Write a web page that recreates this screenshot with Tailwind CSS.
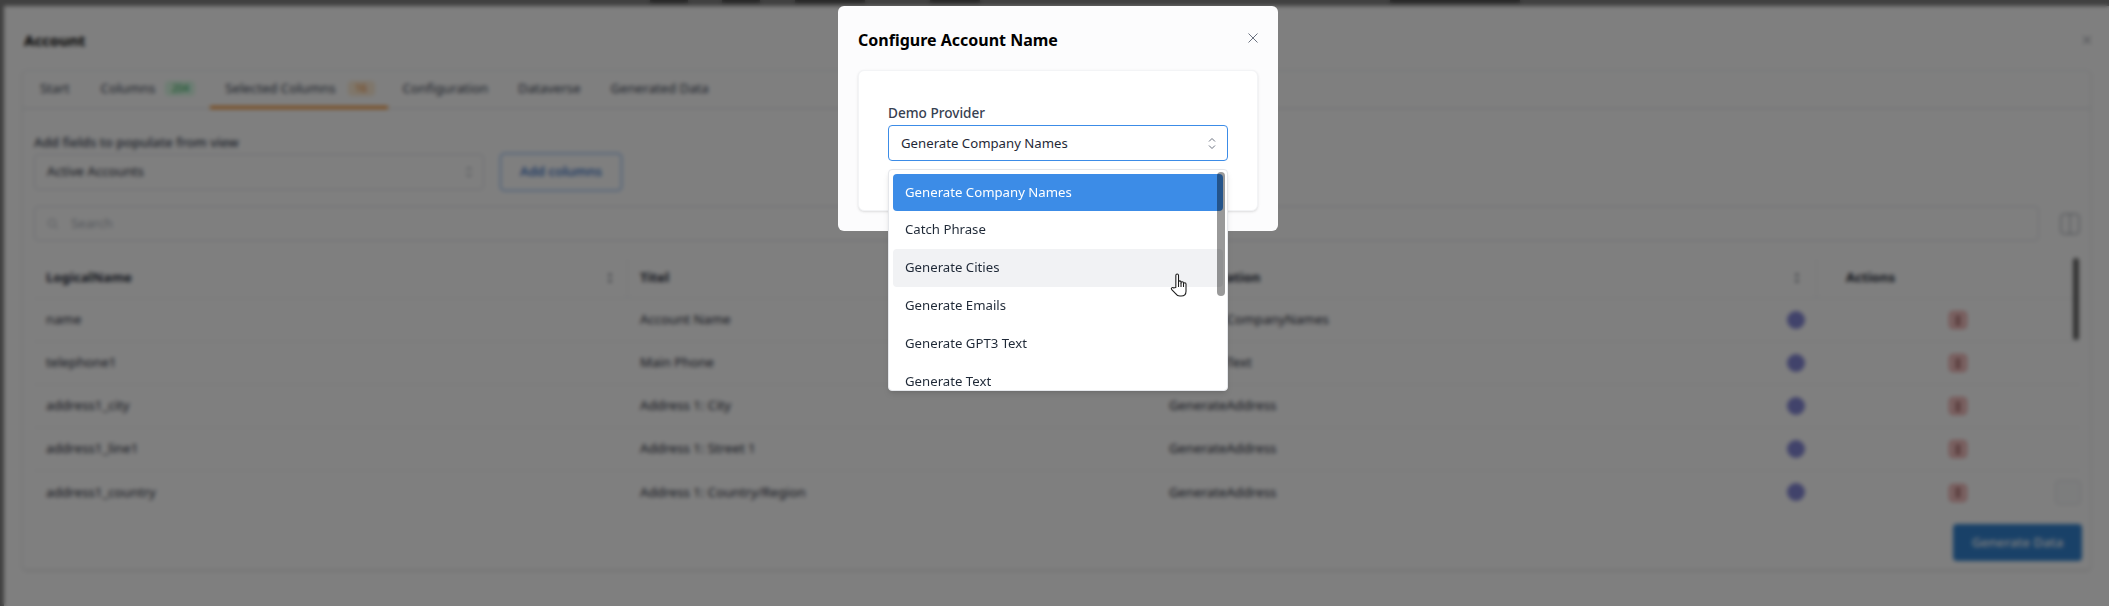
<!DOCTYPE html>
<html lang="en">
<head>
    <meta charset="UTF-8">
    <title>Configure Account Name</title>
    <script src="https://cdn.jsdelivr.net/npm/@tailwindcss/browser@4"></script>
</head>
<body class="font-['Noto_Sans',sans-serif] antialiased">
<div class="relative w-[2109px] h-[606px] overflow-hidden bg-[#808080] flex flex-col text-[13.2px] text-[#1f2937]">
    <!-- Top page strip -->
    <div class="relative h-[6px] shrink-0 overflow-hidden">
        <div class="absolute left-[650px] top-0 w-[38px] h-[3px] bg-[#4b4b4b]"></div>
        <div class="absolute left-[722px] top-0 w-[38px] h-[3px] bg-[#4b4b4b]"></div>
        <div class="absolute left-[795px] top-0 w-[70px] h-[3px] bg-[#4b4b4b]"></div>
        <div class="absolute left-[930px] top-0 w-[50px] h-[3px] bg-[#4b4b4b]"></div>
        <div class="absolute left-[1390px] top-0 w-[130px] h-[3px] bg-[#4b4b4b]"></div>
    </div>

    <!-- Drawer behind the dialog -->
    <div class="flex-1 ml-[4px] bg-white">
        <div class="flex justify-between items-start pl-[20px] pr-[17px] pt-[25px] h-[64px]">
            <span class="text-[15px] leading-[18px] font-bold text-black">Account</span>
            <svg class="w-[10px] h-[10px] mt-[4px] text-[#6b7280]" viewBox="0 0 10 10" fill="none" stroke="currentColor" stroke-width="1"><path d="M1 1l8 8M9 1l-8 8"/></svg>
        </div>
        <div class="mx-[18px] h-[500px] border border-[#eceef1] rounded shadow-sm">
            <!-- Tabs -->
            <div class="flex pl-[2px] h-[38px] border-b border-[#d9dce1] text-[#374151]">
                <div class="px-[15px] pb-[2px] flex items-center">Start</div>
                <div class="pl-[16px] pr-[15px] pb-[2px] flex items-center gap-[10px]">Columns
                    <span class="w-[30px] h-[15px] rounded bg-[#dcfce7] text-[#16a34a] text-[10px] flex items-center justify-center">204</span>
                </div>
                <div class="pl-[15px] pr-[13px] flex items-center gap-[12px] border-b-[3px] border-[#f08a24] h-[38px]">Selected Columns
                    <span class="w-[27px] h-[15px] rounded bg-[#ffedd5] text-[#ea7a17] text-[10px] flex items-center justify-center">16</span>
                </div>
                <div class="px-[15px] pb-[2px] flex items-center">Configuration</div>
                <div class="px-[15px] pb-[2px] flex items-center">Dataverse</div>
                <div class="px-[15px] pb-[2px] flex items-center">Generated Data</div>
            </div>
            <div class="pl-[11px]">
                <div class="pt-[24px] leading-[18px] text-[#374151] font-medium">Add fields to populate from view</div>
                <div class="flex items-center gap-[16px] mt-[2px]">
                    <div class="w-[450px] h-[36px] border border-[#d9dce1] rounded flex items-center justify-between pl-[12px] pr-[10px]">
                        <span class="pb-[1px]">Active Accounts</span>
                        <svg class="w-[8px] h-[12px] text-[#6b7280]" viewBox="0 0 8 12" fill="none" stroke="currentColor"><path d="M1.5 4L4 1.5 6.5 4M1.5 8L4 10.5 6.5 8"/></svg>
                    </div>
                    <button class="w-[122px] h-[38px] border-[1.5px] border-[#5a9cf0] rounded text-[#1f66c1] font-medium pb-[1px]">Add columns</button>
                </div>
                <div class="flex items-center gap-[21px] mt-[15px]">
                    <div class="w-[2005px] h-[35px] border border-[#d9dce1] rounded flex items-center gap-[12px] pl-[12px] text-[#a9afb9]">
                        <svg class="w-[12px] h-[12px]" viewBox="0 0 12 12" fill="none" stroke="currentColor"><circle cx="5" cy="5" r="3.8"/><path d="M8 8l3 3"/></svg>
                        <span>Search</span>
                    </div>
                    <svg class="w-[20px] h-[22px] text-[#8b919c]" viewBox="0 0 20 22" fill="none" stroke="currentColor" stroke-width="1"><rect x="1" y="1" width="18" height="20" rx="3"/><path d="M10 1v20"/></svg>
                </div>
                <!-- Table -->
                <div class="w-[2046px] mt-[16px]">
                    <div class="grid grid-cols-[594px_529px_660px_1fr] h-[42px] items-center font-bold text-[#1f2937] border-b border-[#eceef1]">
                        <div class="flex justify-between items-center pl-[12px] pr-[14px] h-[38px] border-r border-[#eceef1]">LogicalName
                            <svg class="w-[6px] h-[12px] text-[#4b5563]" viewBox="0 0 6 12" fill="currentColor"><path d="M3 1l2 3H1zM3 11L1 8h4z"/></svg>
                        </div>
                        <div class="pl-[12px]">Titel</div>
                        <div class="flex justify-between items-center pl-[12px] pr-[16px] h-[38px] border-r border-[#eceef1]">Configuration
                            <svg class="w-[6px] h-[12px] text-[#4b5563]" viewBox="0 0 6 12" fill="currentColor"><path d="M3 1l2 3H1zM3 11L1 8h4z"/></svg>
                        </div>
                        <div class="pl-[29px]">Actions</div>
                    </div>
                    <div class="grid grid-cols-[594px_529px_660px_1fr] h-[43px] items-center border-b border-[#eceef1]">
                        <div class="pl-[12px]">name</div><div class="pl-[12px]">Account Name</div>
                        <div class="flex justify-between items-center pl-[12px] pr-[12px]">GenerateCompanyNames<span class="w-[18px] h-[18px] rounded-full bg-[#8386d6]"></span></div>
                        <div class="pl-[132px]"><span class="flex items-center justify-center w-[18px] h-[18px] rounded border-[1.5px] border-[#e88a8a] bg-[#f3c4c4]"><span class="w-[4px] h-[9px] border border-[#6b2020]"></span></span></div>
                    </div>
                    <div class="grid grid-cols-[594px_529px_660px_1fr] h-[43px] items-center border-b border-[#eceef1]">
                        <div class="pl-[12px]">telephone1</div><div class="pl-[12px]">Main Phone</div>
                        <div class="flex justify-between items-center pl-[12px] pr-[12px]">GenerateText<span class="w-[18px] h-[18px] rounded-full bg-[#8386d6]"></span></div>
                        <div class="pl-[132px]"><span class="flex items-center justify-center w-[18px] h-[18px] rounded border-[1.5px] border-[#e88a8a] bg-[#f3c4c4]"><span class="w-[4px] h-[9px] border border-[#6b2020]"></span></span></div>
                    </div>
                    <div class="grid grid-cols-[594px_529px_660px_1fr] h-[43px] items-center border-b border-[#eceef1]">
                        <div class="pl-[12px]">address1_city</div><div class="pl-[12px]">Address 1: City</div>
                        <div class="flex justify-between items-center pl-[12px] pr-[12px]">GenerateAddress<span class="w-[18px] h-[18px] rounded-full bg-[#8386d6]"></span></div>
                        <div class="pl-[132px]"><span class="flex items-center justify-center w-[18px] h-[18px] rounded border-[1.5px] border-[#e88a8a] bg-[#f3c4c4]"><span class="w-[4px] h-[9px] border border-[#6b2020]"></span></span></div>
                    </div>
                    <div class="grid grid-cols-[594px_529px_660px_1fr] h-[43px] items-center border-b border-[#eceef1]">
                        <div class="pl-[12px]">address1_line1</div><div class="pl-[12px]">Address 1: Street 1</div>
                        <div class="flex justify-between items-center pl-[12px] pr-[12px]">GenerateAddress<span class="w-[18px] h-[18px] rounded-full bg-[#8386d6]"></span></div>
                        <div class="pl-[132px]"><span class="flex items-center justify-center w-[18px] h-[18px] rounded border-[1.5px] border-[#e88a8a] bg-[#f3c4c4]"><span class="w-[4px] h-[9px] border border-[#6b2020]"></span></span></div>
                    </div>
                    <div class="grid grid-cols-[594px_529px_660px_1fr] h-[43px] items-center">
                        <div class="pl-[12px]">address1_country</div><div class="pl-[12px]">Address 1: Country/Region</div>
                        <div class="flex justify-between items-center pl-[12px] pr-[12px]">GenerateAddress<span class="w-[18px] h-[18px] rounded-full bg-[#8386d6]"></span></div>
                        <div class="pl-[132px]"><span class="flex items-center justify-center w-[18px] h-[18px] rounded border-[1.5px] border-[#e88a8a] bg-[#f3c4c4]"><span class="w-[4px] h-[9px] border border-[#6b2020]"></span></span></div>
                    </div>
                </div>
                <div class="w-[2048px] flex justify-end mt-[10px]">
                    <button class="w-[129px] h-[37px] rounded bg-[#3383d1] text-white font-medium">Generate Data</button>
                </div>
            </div>
        </div>
    </div>

    <!-- Table scrollbar and scroll-to-top button -->
    <div class="absolute left-[2073px] top-[258px] w-[6px] h-[82px] rounded-full bg-black/60"></div>
    <div class="absolute left-[2055px] top-[480px] w-[26px] h-[25px] rounded bg-[#f9fafb] border border-[#dfe2e6]"></div>

    <!-- Backdrop -->
    <div class="absolute inset-0 bg-black/50 backdrop-blur-[2px]"></div>

    <!-- Dialog -->
    <div class="absolute left-[838px] top-[6px] w-[440px] h-[225px] rounded-md bg-[#fcfcfd] px-[20px]">
        <div class="flex justify-between items-center h-[64px]">
            <span class="text-[16px] font-bold text-black pt-[3px]">Configure Account Name</span>
            <svg class="w-[10px] h-[10px] text-[#6b7280]" viewBox="0 0 10 10" fill="none" stroke="currentColor" stroke-width="1"><path d="M.5.5l9 9M9.5.5l-9 9"/></svg>
        </div>
        <div class="h-[141px] rounded-md bg-white shadow-sm border border-[#f3f4f6] pl-[29px] pr-[29px] pt-[32px]">
            <div class="leading-[20px] font-medium text-[#374151] text-[13.6px]">Demo Provider</div>
            <div class="mt-[2px] h-[36px] rounded border border-[#3c8ce7] flex items-center justify-between pl-[12px] pr-[11px] text-[#1f2937]">
                <span class="pt-[1px]">Generate Company Names</span>
                <svg class="w-[8px] h-[13px] text-[#6b7280]" viewBox="0 0 8 13" fill="none" stroke="currentColor"><path d="M1 4.5L4 1.5l3 3M1 8.5l3 3 3-3"/></svg>
            </div>
        </div>
    </div>

    <!-- Open dropdown list -->
    <div class="absolute left-[888px] top-[169px] w-[340px] h-[222px] overflow-hidden rounded bg-white border border-[#e5e7eb] shadow-md px-[4px] pt-[4px] text-[#1f2937]">
        <div class="h-[37px] flex items-center pl-[12px] rounded bg-[#3c8ce7] text-white">Generate Company Names</div>
        <div class="h-[38px] flex items-center pl-[12px]">Catch Phrase</div>
        <div class="h-[38px] flex items-center pl-[12px] rounded bg-[#f1f2f4]">Generate Cities</div>
        <div class="h-[38px] flex items-center pl-[12px]">Generate Emails</div>
        <div class="h-[38px] flex items-center pl-[12px]">Generate GPT3 Text</div>
        <div class="h-[38px] flex items-center pl-[12px]">Generate Text</div>
        <div class="absolute left-[328px] top-[2px] w-[8px] h-[124px] rounded-full bg-black/40"></div>
    </div>

    <!-- Mouse cursor -->
    <svg class="absolute left-[1170px] top-[273px] w-[18px] h-[24px]" viewBox="0 0 18 25" fill="#fff" stroke="#1a1a1a" stroke-width="1.1" stroke-linejoin="round">
        <path d="M5.7 15V2.5a1.4 1.4 0 0 1 2.8 0V9.5a1.3 1.3 0 0 1 2.6 0v1a1.3 1.3 0 0 1 2.6 0v1a1.3 1.3 0 0 1 2.6 0V19c0 3-2 5-5 5h-1.5c-2 0-3.2-1-4.3-2.5L1.2 17c-.8-1.2.8-2.5 2-1.5z"/>
        <path d="M8.5 9.5v5M11.1 10.5v4M13.7 11.5v3" fill="none"/>
    </svg>
</div>
</body>
</html>
